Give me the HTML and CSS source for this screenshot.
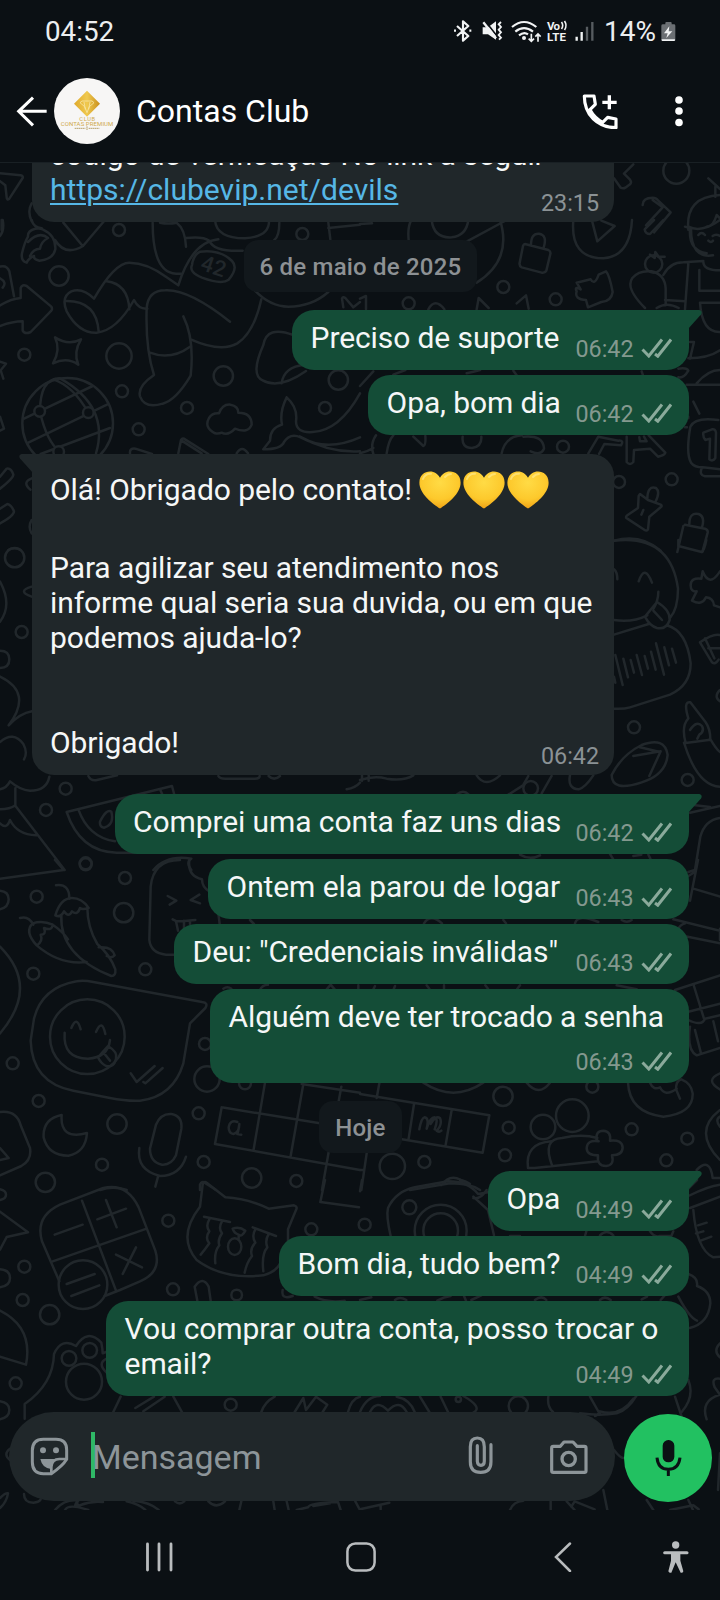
FILE: index.html
```html
<!DOCTYPE html>
<html lang="pt-BR">
<head>
<meta charset="utf-8">
<title>Contas Club</title>
<link rel="stylesheet" href="styles.css">
</head>
<body>
<div class="phone">
  <div class="status">
    <span class="clock">04:52</span>
    <svg class="st-bt" viewBox="280 60 60 66" width="20" height="22"><path d="M292 78l34 30-16 14V64l16 14-34 30M283 92h6M329 92h6" fill="none" stroke="#f1f3f4" stroke-width="6.5" stroke-linejoin="round"/></svg>
    <svg class="st-mute" viewBox="366 60 63 66" width="21" height="22"><path d="M368 82h16l24-18v55l-24-16h-16z" fill="#f1f3f4"/><path d="M376 64l38 48" stroke="#0b1014" stroke-width="5"/><path d="M370 67l38 48" stroke="#f1f3f4" stroke-width="7"/><path d="M423 66l-7 7 7 8-7 8 7 8-7 8 7 8-6 6" fill="none" stroke="#f1f3f4" stroke-width="5.5"/></svg>
    <svg class="st-wifi" viewBox="453 57 93 69" width="31" height="23"><g fill="none" stroke="#f1f3f4" stroke-width="6.5"><path d="M456 78q36-30 73 0M466 92q26-21 53 0M477 103q15-12 27-3"/><path d="M514 98v22M506 113l8 8 8-8M534 122V100M526 107l8-8 8 8" stroke-width="5"/></g><circle cx="492" cy="111" r="6" fill="#f1f3f4"/></svg>
    <svg class="st-volte" viewBox="0 0 23 24" width="23" height="24"><text x="1" y="11" textLength="13">Vo</text><path d="M15.5 3q2.4 3.500 0 7M18.500 2q3 4.500 0 9" fill="none" stroke="#f1f3f4" stroke-width="1.6"/><text x="1" y="22" textLength="19">LTE</text></svg>
    <svg class="st-signal" viewBox="645 66 57 57" width="19" height="19"><path d="M650 110v12M665 96v26" stroke="#f1f3f4" stroke-width="7"/><path d="M681 80v42M697 66v56" stroke="#575c60" stroke-width="7"/></svg>
    <span class="percent">14%</span>
    <svg class="st-batt" viewBox="902 62 45 62" width="15" height="20.7"><path d="M908 72h7v-4q0-3 3-3h13q3 0 3 3v4h7q4 0 4 4v42q0 5-5 5h-32q-5 0-5-5V76q0-4 5-4z" fill="#6b6f73"/><path d="M904 117h40q0 6-5 6h-30q-5 0-5-6z" fill="#f1f3f4"/><path d="M927 78l-16 21h11l-4 14 18-20h-11z" fill="#f1f3f4"/></svg>
  </div>

  <header class="header">
    <svg class="back" viewBox="48 285 96 96" width="32" height="32"><path d="M140 334H57M99 293L56 334l43 42" fill="none" stroke="#fff" stroke-width="9"/></svg>
    <svg class="avatar" viewBox="162 234 198 198" width="66" height="66">
      <defs><linearGradient id="gold" x1="0" x2="1"><stop offset="0" stop-color="#dfa92c"/><stop offset=".5" stop-color="#f0c94f"/><stop offset="1" stop-color="#c98f1c"/></linearGradient></defs>
      <circle cx="261" cy="333" r="99" fill="#f7f6f5"/>
      <path d="M261 272l39 39-39 39-39-39z" fill="url(#gold)"/>
      <path d="M240 308l6-5h30l6 5-14 12-7 18-7-18zM252 306l4 22M270 306l-4 22" fill="none" stroke="#f8e6a4" stroke-width="2.5"/>
      <text x="238" y="363" textLength="47" class="av-a">CLUB</text>
      <text x="182" y="377" textLength="158" class="av-b">CONTAS PREMIUM</text>
      <path d="M224 385h32M266 385h32M261 379v12" stroke="#b7a26a" stroke-width="3" stroke-dasharray="5 1"/>
    </svg>
    <h1 class="title">Contas Club</h1>
    <svg class="call" viewBox="664 278 108 108" width="36" height="36"><path d="M671 287h29l4 25-16 16c9 17 20 28 38 38l15-15 25 5v26c-55 0-95-38-95-95z" fill="none" stroke="#fff" stroke-width="9.5" stroke-linejoin="round"/><path d="M746 285v42M725 306h43" stroke="#fff" stroke-width="10"/></svg>
    <svg class="more" viewBox="0 0 8 32" width="8" height="32"><g fill="#fff"><circle cx="4" cy="5" r="3.8"/><circle cx="4" cy="16" r="3.8"/><circle cx="4" cy="27.5" r="3.8"/></g></svg>
  </header>

  <main class="chat">
    <svg class="wallpaper" viewBox="0 163 720 1347" width="720" height="1347">
      <g transform="scale(.33333)">
        <path d="M0 520l62 6q8 2 6 8l-40 62q-8 6-8-4l-4-36-18-14M95 610q-14 24 0 54M5 660v30"/>
      </g>
      <g transform="translate(360 0) scale(.33333)">
        <path d="M762 535l20 28q8 4 14 0l14-10q6-6 0-14l-18-18 28-28"/><circle cx="949" cy="512" r="39"/>
        <path d="M848 615q0-22 30-22 10 0 16 8l38 36-50 60M878 600l30 22-50 54"/><path d="M985 690q-10-100 95-105M1045 535l35 32M1066 560v30M1040 680q20 0 30-35l10 10"/>
      </g>
      <g transform="translate(0 220) scale(.33333)">
        <path d="M8 0q6 30-8 48M95 0q5 22 30 25M165 60q30 50 84 18l66-78M190 8l58 70M66 100q8-34 18-50-2-18 22-24 14-2 22 2 40 18 38 60-6 30-48 34-18-4-16-14-16 6-22 20-18-6-14-28zM84 66q34-34 60-12-20 10-24 32-20 0-30 22"/>
        <circle cx="357" cy="30" r="18"/><circle cx="177" cy="168" r="29"/><circle cx="907" cy="42" r="18"/>
        <path d="M458 8q0 150 70 153h15M480 8q25 5 50 0 26 20 28 72M558 54q50-6 70 8 14 34 100 30M645 0q4 55 90 55 75-5 72-55M838 8q0 40-15 52M985 8l6 50M985 24l95-10"/>
        <path d="M0 175q22 12 8 28M0 140q20-6 28 14l14 75M0 256q35-20 62-22v-30q4-12 18-6l74 62q4 8 0 12l-62 64q-18 8-24-4v-28q-30 0-68 14"/>
        <path d="M282 236q62-108 106-108 54 0 112 44l35 24q40-130 120-138M282 236q-34-34-68-22-32 16-14 60 36 66 90 64 60-6 112-98 14 28 40 26M320 184q64 8 68 84M200 243q90 0 96 92"/>
        <path d="M440 265q4-54 56-54 70-4 194 94M440 265q-4 120 22 200-50 34-42 64 14 38 68 22 40-10 84-84 12-110-22-178M450 398q62 24 120-18M572 358q90 40 140 12 50-32 72-132"/>
        <path d="M600 95q60-8 96 28 20 20-10 56-20 16-80-6-40-16-30-38 4-30 24-40z"/><text x="598" y="148" class="doodle" font-size="66" transform="rotate(19 598 148)">42</text>
        <path d="M765 212q46 48 100 48 70 0 120-44M1030 262l-4-26q2-8 10-2l24 28 20-16"/>
        <path d="M165 352q40 26 78 6-24 40-8 76-34-24-76-4 24-40 6-78z"/><circle cx="73" cy="404" r="18"/><circle cx="357" cy="408" r="38"/><circle cx="366" cy="514" r="18"/><circle cx="670" cy="468" r="29"/><circle cx="561" cy="564" r="18"/><circle cx="416" cy="628" r="18"/><circle cx="1015" cy="480" r="29"/><circle cx="975" cy="564" r="18"/>
        <path d="M0 425l18 6-16 20 8 25M0 590l12 36-12 6"/>
        <circle cx="203" cy="610" r="136"/><path d="M72 596l206-98M85 668l236-114M122 702l208-78M120 575q0-100 60-100 150 84 108 225M120 575q20 90 60 120M160 478q60 20 105 100"/><g class="knot"><circle cx="119" cy="574" r="16"/><circle cx="265" cy="578" r="16"/><circle cx="176" cy="695" r="16"/></g>
        <path d="M880 345q-80-30-90 30-40 90-2 106 50 28 130-28M845 490q6-50 70-56M645 640q-34-18-18-46 10-16 30-14 10-28 34-26 24 4 24 24 40 0 40 36-10 28-50 12-20 22-40 12-8 4-20 2z"/>
        <path d="M860 532q34 30 28 72 0 36 50 32 80-4 142-116M860 532q-22 44-14 82-36 10-36 48l-20 26q54 0 62-22 18-28 50-14 80 44 178 0M900 650q90 50 180 44M390 700q-2-16 16-14l50 16M535 700l8-40q6-8 12-2l70 44M545 662l60 38M710 700q16-26 34 0"/>
        <path d="M0 770l20-24q14-2 20 18 0 10-40 42M0 866l22-14q12 2 20 22 0 14-42 36M95 775q-30 12-4 34M95 900q-12 20 0 40M25 990q18-10 36 0"/>
      </g>
      <g transform="translate(360 220) scale(.33333)">
        <path d="M0 12l36-2M146 60q-4-40 8-60M215 0q6 55 60 52 44-5 50-52M420 0q38 120-70 188M310 70L440 0M640 0q-10 115 90 115 80-6 86-115M696 2l16 62 52-46-40-16M910 0l-40 42q-14 0-16-14l28-28M975 20l18 6q0 90 66 80M985 20q40 20 95-20M990 30q-4 60 50 70M1015 45q10-12 20 0M1058 48q10-8 22 0M1045 62q8 8 14 0"/>
        <path d="M495 72l70 18q8 4 6 12l-12 50q-4 8-14 6l-60-16q-8-4-6-14l10-50q2-6 6-6zM513 75q0-36 24-34 26 4 14 42"/>
        <circle cx="430" cy="201" r="18"/><circle cx="587" cy="238" r="18"/><circle cx="146" cy="250" r="18"/><circle cx="881" cy="132" r="26"/>
        <path d="M650 188l42-10q12 20 24-14l22-10q10 10 20 62-4 28-34 30l-40 16-6-22q-36-2-28-26-8-16 12-6zM350 268l6-34 30 30M470 250l28-24 8 40M205 268q20-36 48 0M0 236l18-8v40"/>
        <path d="M855 264q-60-60-38-90 20-24 58-20 40 10 42 52v50M910 165q20-38 60-38l60-4M985 130l-10 138M915 240l60 4M1018 150v62h62M1030 125q0 26 50 26M1020 248h60M1020 248q6 90 60 88M870 104l14 10 2-18 10 14 18 0M890 264q30-20 66 0"/>
        <path d="M990 366h12l-12 50M985 415q60 0 95-24M955 446q26-4 30 6-14 24-30 20M1010 490q34-40 70-40M980 494h100M845 454l6 18M1000 545l18 36M985 590v5M975 622h6M0 498l40-44M100 464l36-14M320 460q20-4 40-10M460 452l10 14"/>
        <path d="M1075 600q-70-10-84 20-14 80 2 108 10 14 36 14l51 6M1025 745q-8 20 10 24h45M1030 638l26-10q10-2 12 10l-2 76q-8 12-18 4l2-62-14 4q-8-10-6-22"/>
        <path d="M685 700l30-50 60 12q18-2 8 14l-50-4-16 30M800 650v76q10 12 20 0l2-36 48-4 24 24q20-4 22-12l-50-52M838 652l2 12h20l-8-14M40 702q-10-30 8-56M80 700q6-40 20-54M160 650l30 28q8-2 6-30M0 700q24-6 40-16M425 700q10-50 60-54M490 650q60-6 62 36-10 22-40 8M308 650q-4 34 28 34 30-4 28-34"/>
        <circle cx="609" cy="680" r="18"/><circle cx="777" cy="786" r="18"/><circle cx="935" cy="778" r="18"/>
        <path d="M840 822l24 18 38 14q6 4 0 8l-34 28-4 38q-4 6-10 2l-52-34q-8-4 0-10l32-22 2-36zM862 838q0-42 26-34 14 12-2 42M850 870l-6 14M975 914l60 12q10 4 8 12l-16 58M970 918l-18 78M988 912q0-36 28-30 20 8 10 40M762 962q80-22 140 30"/>
      </g>
      <g transform="translate(0 540) scale(.33333)">
        <circle cx="44" cy="53" r="29"/><circle cx="65" cy="276" r="18"/><path d="M95 140q-46 14 0 30M0 125q38 70 0 120M0 332q28 0 28 26t-28 26M0 410q100 48 26 146 34-36 70-42M0 606q40-34 70 6 14 26 2 46M0 748q20-4 30-24 30 26 60 28 50 0 58-42M46 745v52l148 193M0 808q30 0 46-12M0 850q20 20 30-10 22 44 78 46"/>
        <circle cx="197" cy="746" r="18"/><circle cx="138" cy="810" r="18"/><circle cx="257" cy="970" r="18"/>
        <path d="M265 708q8 16 26 12l60-14M200 816l316-78 8 30M200 816q40 120 150 122h60M235 808q30 84 110 96M480 748l8 18M300 845q20-40 34-30 10 40-22 48-14-2-12-18zM655 708q4 8 20 8h90q14 0 14-8M806 708q16 16 34 0M1040 748q26-4 40-20M460 990q40-46 114-34-18 10 0 34"/>
      </g>
      <g transform="translate(360 540) scale(.33333)">
        <path d="M762 2q170-20 192 144 0 60-24 88M762 240q56 8 100-14M895 155q0 26-14 50M836 124q18-54 40 4M762 88q10 8 10 30M855 230l36-44q40 24 38 54-10 30-38 24-22-6-36-34zM880 212l26 28M762 284l104-32M920 256q60 16 72 114 0 66-62 94l-120 38q-20 6-48 4M955 0v18l70 18q8-4 14-36"/>
        <path d="M766 345l22 90M762 410l4 18M790 356l14 56M812 360l10 38M830 345l16 60M854 348l10 38M873 335l14 54M888 310l24 94M913 322l14 54M936 326l12 42"/>
        <path d="M1028 94q20 50 52 0M1028 94l-4 22q-32-4-32 20 0 20 18 18l-14 28q30 16 42-10 22 2 24 24l18 6M1080 285q-20-6-60 22l36 60q10 8 20-8M1035 295l28 60M1045 325h35M1080 450q-20 20 0 34"/>
        <circle cx="822" cy="562" r="18"/><circle cx="983" cy="720" r="18"/>
        <path d="M985 535q-16-52 6-48l46 60q14 20 14 52l-74 10q-14-50 8-74zM972 608q40 130 108 132M1050 596q20 34 30 40M990 570q20-30 36-12 8 16-8 26l-6 12M755 705q30-60 90-90 70-26 78 30-6 60-78 82-90 30-90-22zM820 648l82-14-34 74M840 622l60 14"/>
        <path d="M630 706q-8 40 26 42 20-6 44-42M350 706q26 40 70 0M505 708l-16 28-44 28M575 708l-30 52M0 720q44-14 80-4 50 8 80-10M6 706v16M26 706v16M290 764q20-18 36 0"/><circle cx="512" cy="745" r="22"/>
        <path d="M1005 990l16-100q14-50 59-56M990 818l90-20M1000 795l50 6M480 944q30 18 60 2M750 942l10 16M820 948l24-4M865 944l6 12"/>
      </g>
      <g transform="translate(0 860) scale(.33333)">
        <path d="M165 0l26 30L0 56M0 92q26 2 26 26T0 148M0 260q120 120 0 260M60 174q26-8 40 20M168 76q40-6 40 40"/>
        <circle cx="257" cy="13" r="18"/><circle cx="375" cy="54" r="18"/><circle cx="110" cy="110" r="18"/><circle cx="371" cy="158" r="29"/><circle cx="100" cy="341" r="18"/><circle cx="436" cy="328" r="18"/><circle cx="38" cy="610" r="18"/><circle cx="116" cy="723" r="18"/><circle cx="351" cy="792" r="29"/><circle cx="596" cy="760" r="18"/><circle cx="306" cy="914" r="18"/><circle cx="136" cy="967" r="29"/><circle cx="611" cy="906" r="18"/><circle cx="755" cy="954" r="29"/><circle cx="889" cy="963" r="18"/><circle cx="615" cy="552" r="18"/><circle cx="621" cy="657" r="38"/><circle cx="735" cy="670" r="18"/>
        <path d="M184 166q-6 120 150 182 14 0 12-20-16-44-54-76-30-50-30-110M166 166q16-52 50-52 30 0 50 30-20 6-26 0-8 24-24 10-10 20-24 0-10 20-26 12zM110 256q-38-42-12-66 30-10 60 4-2 20-26 10 8 20-10 20 8 20-12 32zM110 256q70 60 150 50M158 194q30 20 46 44M296 262q40-4 48 24-8 10-24 2"/>
        <path d="M540 0q-80 0-88 80l-4 160q4 40 50 44h30M568 0q-6 48 38 58 0 24 22 36M503 108l26 14-20 12M598 104l-26 16 28 10M518 178l12 6q20 0 56-4M528 184l6 28M552 182v30M570 182v10M655 160l4 32M750 180l12 12M670 386q12-8 24 0M780 390q6-16 24-16M980 388l12-14 12 14M1075 376v12"/>
        <path d="M230 364q20-4 50 2l326 60q20 2 10 18l-46 46-20 120q-30 100-130 112-40 2-90-8l-110-22q-124-24-128-150l10-66q24-94 128-112z"/>
        <circle cx="262" cy="530" r="112"/><path d="M194 518q-6 78 70 78 60-4 66-56M214 504q16-40 28 4M288 516q18-42 28 6M294 592l30-34q30 18 24 38-6 28-30 22-16-8-24-26zM312 580l18 22M392 640l18 26 54-48M430 666l6 4 52-46"/>
        <path d="M185 765q-6 76 76 54-4 58-56 68-60 0-74-54-4-56 54-68zM0 756q50-6 62 40l28 68q6 36-26 54L0 946M0 864l26 30-26 6"/>
        <path d="M468 794q14-34 46-32 34 6 30 44l-16 80q-14 30-42 28-36-8-36-48zM418 864q-10 66 62 84 60 0 78-58M474 950l-8 30M300 990q40-14 80 0M600 990v-16q6-12 14-6l34 22"/>
        <path d="M665 742L960 790M645 852l435 78M665 742l-20 110M795 668l-34 200M910 672l-38 216M905 672l175 26M1024 680l-8 44M986 876l-20 114"/><path d="M712 786q-22-8-26 16 0 18 14 20 18-4 18-30-4 28-6 30l12 2"/>
      </g>
      <g transform="translate(360 860) scale(.33333)">
        <path d="M985 36l20 -6M1014 0l-24 122M985 48l20-12M1000 86l80 24M940 178l140 34M975 190q-30 10-14 36l119 24M1080 206v34M945 390l135-44M1000 372l32 104M985 455l95-24M985 480q40 20 50-4l45-10M990 500q-10 70 20 86l70-22M1005 510l18 70M1060 484l14 60M192 190q20-30 54 0M430 180l8 10M645 190q8-30 70-4M785 180q16 10 30 0M40 388l5-10M105 378l-4 10M200 376l8 10M252 376v10M376 376l8 10M480 376l-8 10M770 376l60 12"/>
        <path d="M0 702l388 64-20 112-242-40M58 670l-8 44M162 732l-16 104M275 750l-18 104M20 880l-16 110M0 930h8M190 668q90 60 180 0M500 668q36 44 70 0M178 808q6-34 16-36 14 2 6 34 10-34 24-34 12 4 0 36M212 792q14-26 28-18 8 20-10 38 8 6 14 0"/>
        <circle cx="429" cy="709" r="29"/><circle cx="446" cy="803" r="18"/><circle cx="435" cy="886" r="18"/><circle cx="193" cy="906" r="18"/><circle cx="97" cy="919" r="38"/><circle cx="697" cy="680" r="18"/><circle cx="815" cy="808" r="18"/><circle cx="982" cy="836" r="18"/><circle cx="919" cy="901" r="18"/><circle cx="549" cy="801" r="37"/><circle cx="637" cy="767" r="49"/>
        <path d="M504 924q-10-74 70-80M504 924h20l190-20M576 916q-30-80 30-82 60-14 106 0M710 840q-4-28 20-28 24 2 20 30 36-4 38 20 0 24-32 24 8 30-18 32-28 0-24-32-34 0-34-22 2-26 36-20z"/>
        <path d="M804 668q4 90 106 102 90-10 88-70-4-30-34-42-16 4-16 30l12 28M870 668q10 24 30 14 14 30 50 4M1080 640q-48 20 0 48M1080 750q-84 64 0 150M1080 770q-16 10 0 30M245 975q30-44 80 0M1010 930q40-40 48 24h22M985 986l26-26M150 990l120-20q60 0 90 20"/>
      </g>
      <g transform="translate(0 1180) scale(.33333)">
        <path d="M310 24q70-16 106 58l50 130q20 64-46 92l-60 26-46 18M310 24l-130 50q-76 36-54 110l52 120M246 62l102 270M158 244l282-98M164 164l84-30M292 118l86-32M318 60l32 82M348 224l78 38M408 202l-40 80"/>
        <circle cx="249" cy="314" r="73"/><path d="M200 312l84-30M214 348l84-32M0 95l84 62-64 14-20 38M0 268q30 2 30 26T0 322M0 392q100 50 78 162L0 530M0 664q28 4 28 26T0 718M0 28q18 4 18 16T0 60"/>
        <circle cx="73" cy="260" r="18"/><circle cx="68" cy="360" r="18"/><circle cx="149" cy="404" r="29"/><circle cx="505" cy="122" r="18"/><circle cx="519" cy="328" r="18"/><circle cx="710" cy="345" r="16"/><circle cx="934" cy="148" r="18"/><circle cx="47" cy="610" r="18"/><circle cx="692" cy="674" r="18"/><circle cx="207" cy="535" r="22"/><circle cx="269" cy="511" r="22"/><circle cx="252" cy="605" r="54"/>
        <path d="M600 80l8-66q4-12 12-6l56 44q70 4 130 34l76-10q12 4 6 14l-24 58v56M600 80q-70 90-10 160 80 60 200 46 50-14 54-50M612 110l78 16M758 142l70 26M628 118q-12 20 0 36-14 20 0 36-14 20-26 34M666 124q-12 20 0 36-14 20-8 36-16 20-12 54M766 148q-12 20 0 40-18 20-10 40-16 20-22 50M806 162q-12 20-4 40-18 20-12 72M698 146q20-8 38 6-10 20-20 12-14-4-18-18zM716 166v10"/><ellipse cx="704" cy="200" rx="20" ry="25"/>
        <path d="M584 320q24-34 42 0l6 42M584 320l8 42M848 330q-6 30 30 18M975 0l-14 66 116 16M944 350q40 20 90 12"/>
        <path d="M74 716v-44q86-60 88-150 22-50 66-24 34-54 76-10 4 20 4 32l10-4M320 536q-30 14 0 42M362 650l-24 50M406 684l56-34M430 694l64-44M520 650l28 50M784 696q10-30 40-46M884 696l26-42 8 36 30-40 34 24-14 22M1044 696q10-40 36-46"/>
      </g>
      <g transform="translate(360 1180) scale(.33333)">
        <path d="M92 168q-14-60-8-84 24-50 80-62l100-18q60 0 90 38l34-6M340 50l44 40 18 76M300 0q20 4 30 12M6 0L0 34M380 30q-20 30-40 24"/><circle cx="148" cy="82" r="21"/><circle cx="242" cy="152" r="78"/><circle cx="242" cy="152" r="52"/><circle cx="14" cy="134" r="18"/>
        <path d="M985 48q60-30 95-34M990 84l90-34M1000 90q10 120 60 142l20-2M1014 136l26-8M1008 160l22-6M1022 182l32-12M985 282q30 10 26 36 40 14 40 52-6 60-62 74M955 350q34 64 56 72M675 168l4-14M870 154q14 20 30 14h34l6-14M720 166q20-20 40 0M0 360l34-8M105 360q14-12 34 0M232 362q20-12 40-14M312 348l6 14M334 360l30-14M525 360q20-16 34 0M720 360q14-14 32 0M845 358l16-8M902 360l12-14M450 168l30 0M1080 490q-22 22 0 42M1080 596q-28-4-16 26l16 22M985 600q20 50-20 96M945 650l20 60M1040 718q-20-56 40-74"/>
        <circle cx="475" cy="678" r="29"/><circle cx="295" cy="658" r="8"/><path d="M0 696q20-48 60-48M30 696q20-40 54-4 34-36 56 4M110 650q40 8 54 46M180 650l28 46M242 650l22 46M310 648q60 34 30 50M565 650q-4 30 14 46M690 650l26 46M820 656q-40 56-100 38"/>
      </g>
      <g transform="translate(0 1390) scale(.33333)">
        <path d="M30 176q-22 16 0 34M0 324q16-16 24-14-4 26-24 44M72 312q0 26 28 26 18-2 22-10M165 360q30-34 70-28-20 20 4 14 34-14 70-10M195 360q10-20 70 0M400 332q50 4 76 28M380 334q40 10 56 26M525 334q14 12 28 0M625 334q24 24 50 0M718 360l6-26M820 334l4 26M860 334l6 26M890 360l34-8q4-14 90-16l8 24M1066 334l14 26M232 334v12M940 348l50-8"/>
      </g>
      <g transform="translate(360 1390) scale(.33333)">
        <path d="M0 358l88-20M62 348v10M450 360q10-26 40-28M572 334v26M620 334l24 26M634 350l10-16 60 24M762 180q20 26 30 24M730 300l12 60M660 70q60 8 110 0 34-10 60-54M705 78q4 0 14-10M860 330l20 30M985 330l14 30M930 360l70-14 16 12M1080 190l-6 110"/>
      </g>
    </svg>

    <div class="messages">
      <div class="bubble in first"><p class="text">código de verificação No link a seguir<br><a class="link">https://clubevip.net/devils</a></p><span class="meta">23:15</span></div>

      <div class="date">6 de maio de 2025</div>

      <div class="bubble out tail w397"><p class="text">Preciso de suporte</p><span class="meta">06:42<svg class="ticks"><use href="#ticks"/></svg></span></div>
      <div class="bubble out w321"><p class="text">Opa, bom dia</p><span class="meta">06:42<svg class="ticks"><use href="#ticks"/></svg></span></div>

      <div class="bubble in tail gap"><p class="text"><span class="emoji-line">Olá! Obrigado pelo contato! <svg class="heart"><use href="#heart"/></svg><svg class="heart"><use href="#heart"/></svg><svg class="heart"><use href="#heart"/></svg></span><br>Para agilizar seu atendimento nos<br>informe qual seria sua duvida, ou em que<br>podemos ajuda-lo?<br><br><br>Obrigado!</p><span class="meta">06:42</span></div>

      <div class="bubble out tail gap w574"><p class="text">Comprei uma conta faz uns dias</p><span class="meta">06:42<svg class="ticks"><use href="#ticks"/></svg></span></div>
      <div class="bubble out w481"><p class="text">Ontem ela parou de logar</p><span class="meta">06:43<svg class="ticks"><use href="#ticks"/></svg></span></div>
      <div class="bubble out w515"><p class="text">Deu: "Credenciais inválidas"</p><span class="meta">06:43<svg class="ticks"><use href="#ticks"/></svg></span></div>
      <div class="bubble out w479 meta-below"><p class="text">Alguém deve ter trocado a senha</p><span class="meta">06:43<svg class="ticks"><use href="#ticks"/></svg></span></div>

      <div class="date today">Hoje</div>

      <div class="bubble out tail w200"><p class="text">Opa</p><span class="meta">04:49<svg class="ticks"><use href="#ticks"/></svg></span></div>
      <div class="bubble out w410"><p class="text">Bom dia, tudo bem?</p><span class="meta">04:49<svg class="ticks"><use href="#ticks"/></svg></span></div>
      <div class="bubble out w583"><p class="text">Vou comprar outra conta, posso trocar o<br>email?</p><span class="meta">04:49<svg class="ticks"><use href="#ticks"/></svg></span></div>
    </div>

    <div class="composer">
      <div class="field">
        <svg class="sticker" viewBox="90 144 117 117" width="39" height="39"><path d="M130 151h38q32 0 32 32v28q-12 20-46 43h-24q-33 0-33-35v-34q0-34 33-34z" fill="none" stroke="#8d9599" stroke-width="9"/><circle cx="129" cy="184" r="9" fill="#8d9599"/><circle cx="168" cy="184" r="9" fill="#8d9599"/><path d="M121 210h46q-8 12-14 14v16q-26-2-32-30z" fill="#8d9599"/><path d="M154 254v-20q2-24 24-24h22" fill="none" stroke="#8d9599" stroke-width="8"/></svg>
        <span class="caret"></span>
        <span class="placeholder">Mensagem</span>
        <svg class="clip" viewBox="325 142 76 116" width="25.3" height="38.7"><path d="M394 168v51q0 32-31 32t-31-32v-45q0-26 21-26t21 26v44q0 12-10 12t-11-12v-47" fill="none" stroke="#8d9599" stroke-width="9.5" stroke-linecap="round"/></svg>
        <svg class="camera" viewBox="567 148 119 108" width="39.7" height="36"><path d="M580 170h21l11-13h27l12 13h22q5 0 5 5v68q0 5-5 5h-93q-5 0-5-5v-68q0-5 5-5z" fill="none" stroke="#8d9599" stroke-width="9.5" stroke-linejoin="round"/><circle cx="626" cy="208" r="20" fill="none" stroke="#8d9599" stroke-width="10"/></svg>
      </div>
      <div class="mic"><svg viewBox="885 146 81 114" width="27" height="38"><rect x="908" y="149" width="35" height="67" rx="17" fill="#0b1014"/><path d="M891 202q3 35 34 35t35-35M925 237v20" fill="none" stroke="#0b1014" stroke-width="9"/></svg></div>
    </div>
  </main>

  <nav class="nav">
    <svg class="recents" viewBox="0 0 28 30" width="28" height="30"><path d="M2.500 2v26M14 2v26M26 2v26" stroke="#b9bcbe" stroke-width="2.8" stroke-linecap="round"/></svg>
    <svg class="home" viewBox="0 0 30 30" width="30" height="30"><rect x="1.4" y="1.4" width="27.2" height="27.2" rx="8" fill="none" stroke="#b9bcbe" stroke-width="2.5"/></svg>
    <svg class="prev" viewBox="0 0 18 30" width="18" height="30"><path d="M16 1.500L2 15l14 14" fill="none" stroke="#b9bcbe" stroke-width="2.5" stroke-linecap="round"/></svg>
    <svg class="access" viewBox="908 455 77 96" width="25.7" height="32"><circle cx="946" cy="467" r="11" fill="#b9bcbe"/><path d="M913 490h67" stroke="#b9bcbe" stroke-width="9" stroke-linecap="round"/><path d="M932 490h28v24l9 32q-2 6-8 4l-15-31-13 31q-6 2-9-4l8-32z" fill="#b9bcbe"/></svg>
  </nav>
</div>

<svg class="defs" width="0" height="0">
  <defs>
    <radialGradient id="yellow" cx=".5" cy=".3" r=".75"><stop offset="0" stop-color="#ffdb45"/><stop offset=".6" stop-color="#fdc92c"/><stop offset="1" stop-color="#ec9a12"/></radialGradient>
    <symbol id="heart" viewBox="0 0 42 38"><path d="M21 37.6C14 33 0 22.500.4 11.500.6 4 5.500.5 11 .5c4.500 0 8 2.500 10 6.300C23 3 26.500.5 31 .5c5.500 0 10.400 3.500 10.600 11C42 22.500 28 33 21 37.600z" fill="url(#yellow)"/><path d="M4 8q2-5.500 8-5.200M26 6q2.500-3 6-3" fill="none" stroke="#ffe98a" stroke-width="2" stroke-linecap="round" opacity=".7"/></symbol>
    <symbol id="ticks" viewBox="0 0 31 20"><path d="M1.500 11.500l6.300 6.500L21 1.500M14 16l2.800 2.200L30 1.500" fill="none" stroke="#8aaa9b" stroke-width="3"/></symbol>
  </defs>
</svg>
</body>
</html>
```

FILE: styles.css
```css
* { box-sizing: border-box; }
body {
  margin: 0;
  background: #0b1014;
  color: #f5f7f7;
  font-family: Roboto, "Noto Sans", sans-serif;
}
svg { display: block; flex: none; }
.phone { width: 720px; height: 1600px; display: flex; flex-direction: column; overflow: hidden; }

/* status bar */
.status { height: 62px; display: flex; align-items: center; padding-left: 45px; color: #eceef0; }
.clock { font-size: 27.8px; width: 408px; }
.st-mute { margin-left: 9px; }
.st-wifi { margin-left: 8px; }
.st-volte { margin-left: 4px; }
.st-volte text { font-size: 11.5px; font-weight: 700; fill: #f1f3f4; }
.st-signal { margin-left: 6px; }
.percent { font-size: 28px; width: 57px; margin-left: 10px; white-space: nowrap; }

/* chat header */
.header { height: 101px; display: flex; align-items: center; padding: 0 37px 2px 16px; border-bottom: 1px solid #192024; }
.avatar { margin-left: 6px; }
.av-a { font-size: 17px; fill: #cfa94c; }
.av-b { font-size: 18px; fill: #cfa94c; }
.title { flex: 1; margin: 0 0 0 16px; font-size: 32px; font-weight: 400; color: #fff; }
.more { margin-left: 57px; }

/* conversation */
.chat { position: relative; height: 1347px; overflow: hidden; display: flex; flex-direction: column; }
.wallpaper { position: absolute; left: 0; top: 0; fill: none; stroke: #21272b; stroke-width: 7.5; stroke-linecap: round; stroke-linejoin: round; }
.knot { fill: #0b1014; }
.doodle { font-family: Roboto, sans-serif; stroke: none; fill: #21272b; font-weight: 500; }
.messages { position: relative; height: 1233px; display: flex; flex-direction: column; align-items: flex-start; gap: 5px; padding: 0 31px 0 32px; }
.bubble { position: relative; display: grid; flex: none; border-radius: 22px; }
.bubble > * { grid-area: 1 / 1; }
.in { width: 582px; background: #20272a; }
.out { align-self: flex-end; background: #144d37; }
.first { margin-top: -36px; }
.gap { margin-top: 14px; }
.in.tail { border-top-left-radius: 0; }
.out.tail { border-top-right-radius: 0; }
.tail::before { content: ""; position: absolute; top: 0; width: 14px; height: 19px; }
.in.tail::before { left: -13px; background: #20272a; clip-path: path("M14 0H2.500Q-1 1 1 4.500L14 19z"); }
.out.tail::before { right: -13px; background: #144d37; clip-path: path("M0 0H11.500Q15 1 13 4.500L0 19z"); }
.text { margin: 0; padding: 10px 0 15px 18px; font-size: 30px; line-height: 35px; letter-spacing: -0.1px; white-space: nowrap; }
.out .text { padding-left: 18.6px; }
.emoji-line { display: inline-flex; align-items: flex-start; height: 86px; line-height: 51px; letter-spacing: -0.06px; white-space: pre; vertical-align: top; }
.heart { width: 42px; height: 38px; margin: 7px 2px 0 0; }
.link { color: #56b7e6; letter-spacing: 0.02px; text-decoration: underline; text-decoration-thickness: 2px; text-underline-offset: 3px; }
.meta { align-self: end; justify-self: end; display: flex; align-items: center; margin: 0 17px 7px 0; font-size: 23.3px; line-height: 27px; color: #8b9295; }
.in .meta { margin-right: 15px; margin-bottom: 5px; }
.out .meta { color: #84998f; }
.ticks { width: 31px; height: 20px; margin: 0 0 3px 7.500px; }
.meta-below { height: 94px; }
.w200 { width: 201px; }
.w321 { width: 321px; }
.w397 { width: 397px; }
.w410 { width: 410px; }
.w479 { width: 479px; }
.w481 { width: 481px; }
.w515 { width: 515px; }
.w574 { width: 574.5px; }
.w583 { width: 583px; }
.date { align-self: center; flex: none; height: 52px; margin: 13px 0; padding: 0 16px; border-radius: 14px; background: #12181c; color: #8d9194; font-size: 24px; font-weight: 500; letter-spacing: 0.2px; line-height: 54px; }

/* composer */
.composer { position: relative; display: flex; align-items: center; gap: 9px; margin-top: 15px; padding-left: 9px; }
.field { width: 606px; height: 89px; display: flex; align-items: center; border-radius: 45px; background: #20272a; }
.sticker { margin-left: 21px; }
.caret { width: 4px; height: 46px; margin: -4px 0 0 22px; background: #2fb866; }
.placeholder { width: 327px; margin-left: -3px; font-size: 34px; color: #8d9599; }
.clip { margin: -2px 0 0 49px; }
.camera { margin-left: 56px; }
.mic { width: 88px; height: 88px; display: grid; place-items: center; margin-top: 3px; border-radius: 50%; background: #22c161; }

/* navigation bar */
.nav { height: 90px; display: flex; align-items: center; padding: 4px 0 0 145px; }
.home { margin-left: 173px; }
.prev { margin-left: 178px; }
.access { margin-left: 91px; }
.defs { position: absolute; }
```
